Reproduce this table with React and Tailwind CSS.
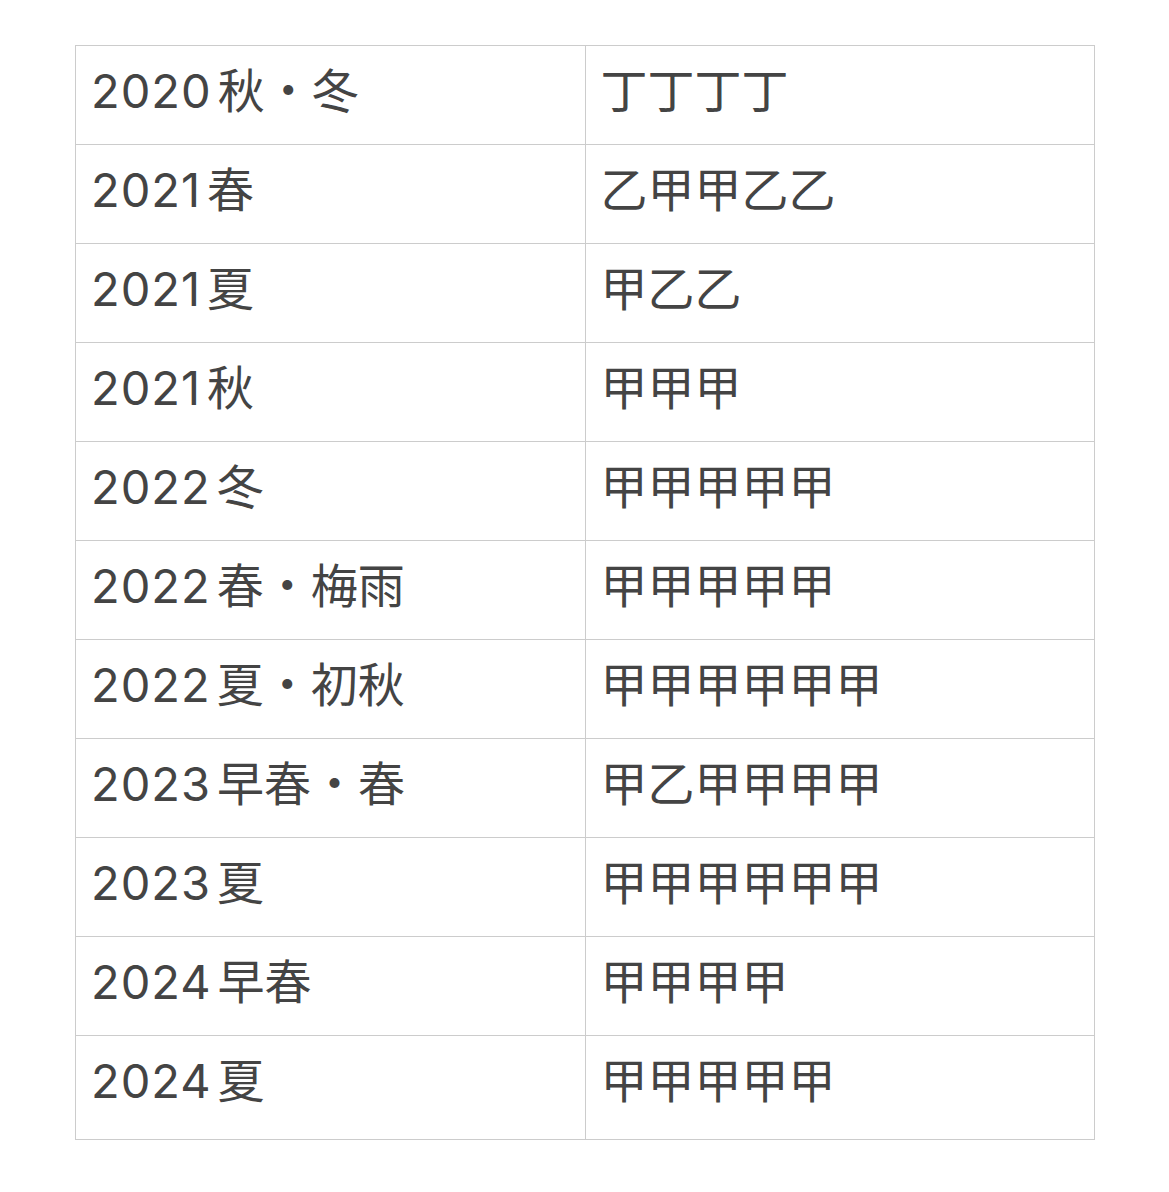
const rows = [
  ["2020", "秋・冬", "丁丁丁丁"],
  ["2021", "春", "乙甲甲乙乙"],
  ["2021", "夏", "甲乙乙"],
  ["2021", "秋", "甲甲甲"],
  ["2022", "冬", "甲甲甲甲甲"],
  ["2022", "春・梅雨", "甲甲甲甲甲"],
  ["2022", "夏・初秋", "甲甲甲甲甲甲"],
  ["2023", "早春・春", "甲乙甲甲甲甲"],
  ["2023", "夏", "甲甲甲甲甲甲"],
  ["2024", "早春", "甲甲甲甲"],
  ["2024", "夏", "甲甲甲甲甲"],
];

export default function App() {
  return (
    <div className="min-h-[1192px] w-[1169px] bg-white pt-[45px] pl-[75px]">
      <div
        className="grid w-[1020px] grid-cols-2 border-l border-t border-[#cccccc] text-[47px] text-[#444444]"
        style={{ fontFamily: 'Inter, "Noto Sans CJK JP", sans-serif' }}
      >
        {rows.map(([y, s, b], i) => {
          const last = i === rows.length - 1;
          const h = last ? "h-[104px] pb-[15px]" : "h-[99px] pb-[10px]";
          return [
            <div key={`a${i}`} className={`${h} flex items-center border-b border-r border-[#cccccc] pl-[15px] leading-none`}>
              <span className="mr-[6px] tracking-[1px]">{y}</span>
              <span>{s}</span>
            </div>,
            <div key={`b${i}`} className={`${h} flex items-center border-b border-r border-[#cccccc] pl-[15px] leading-none`}>
              {b}
            </div>,
          ];
        })}
      </div>
    </div>
  );
}
